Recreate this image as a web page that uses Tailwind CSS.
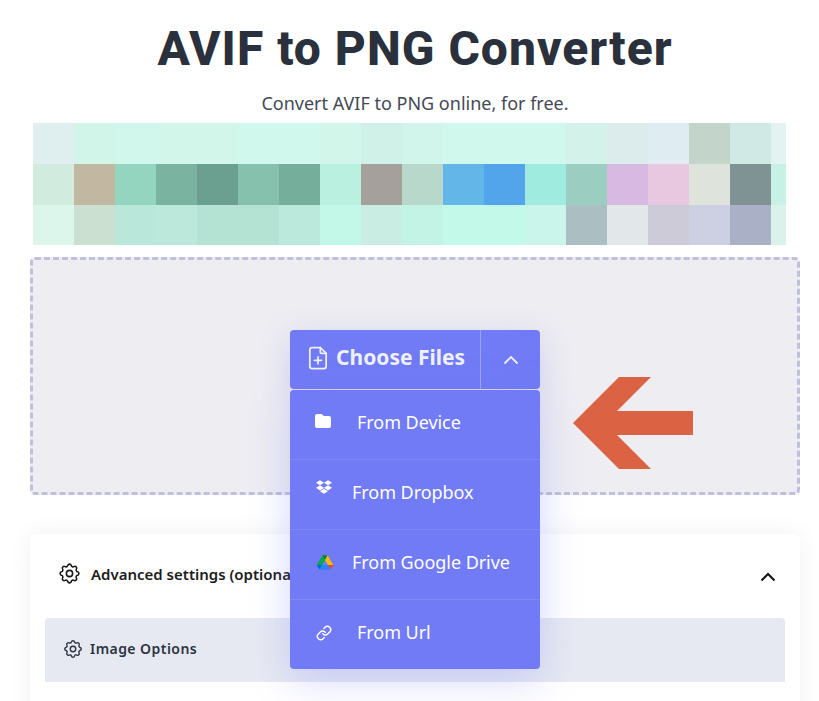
<!DOCTYPE html>
<html lang="en">
<head>
    <meta charset="UTF-8">
    <meta name="viewport" content="width=device-width, initial-scale=1.0">
    <title>AVIF to PNG Converter</title>
    <script src="https://cdn.jsdelivr.net/npm/@tailwindcss/browser@4"></script>
</head>
<body class="bg-white font-['Noto_Sans',sans-serif]">
    <div class="h-[701px] w-[819px] overflow-hidden relative">
        <h1 class="ml-[30px] w-[770px] pt-[17px] h-[88px] text-center text-[48px] leading-[64px] font-extrabold text-[#2a303c] font-['Roboto',sans-serif] tracking-[1px]">AVIF to PNG Converter</h1>
        <p class="ml-[30px] w-[770px] h-[35px] text-center text-[18px] leading-[30px] text-[#434956]">Convert AVIF to PNG online, for free.</p>

        <!-- pixelated preview -->
        <div class="ml-[33px] w-[753px] h-[122px] grid grid-cols-[repeat(18,41px)_15px] grid-rows-[41px_41px_40px]">
            <div class="bg-[#dfeeee]"></div><div class="bg-[#d2f5ea]"></div><div class="bg-[#d1f7ec]"></div><div class="bg-[#d2f6ea]"></div><div class="bg-[#d2f6ea]"></div><div class="bg-[#d1f8ed]"></div><div class="bg-[#d1f8ed]"></div><div class="bg-[#d3f6eb]"></div><div class="bg-[#cff1e7]"></div><div class="bg-[#d1f5ea]"></div><div class="bg-[#d1f8ed]"></div><div class="bg-[#d1f8ed]"></div><div class="bg-[#d1f8ed]"></div><div class="bg-[#d3f3ea]"></div><div class="bg-[#dcecec]"></div><div class="bg-[#dfecf2]"></div><div class="bg-[#c3d5ca]"></div><div class="bg-[#d1e9e5]"></div><div class="bg-[#e3f3f2]"></div>
            <div class="bg-[#d2ebdf]"></div><div class="bg-[#c2b8a2]"></div><div class="bg-[#93d5bf]"></div><div class="bg-[#7ab4a1]"></div><div class="bg-[#6b9f8f]"></div><div class="bg-[#85c1ac]"></div><div class="bg-[#75af9b]"></div><div class="bg-[#b9f0e0]"></div><div class="bg-[#a5a09c]"></div><div class="bg-[#b8d8cc]"></div><div class="bg-[#63b6e8]"></div><div class="bg-[#52a5ea]"></div><div class="bg-[#a0ebdf]"></div><div class="bg-[#9bcdc0]"></div><div class="bg-[#d8b9e2]"></div><div class="bg-[#e8c8e0]"></div><div class="bg-[#dee4dc]"></div><div class="bg-[#7f9394]"></div><div class="bg-[#c8f1e5]"></div>
            <div class="bg-[#dcf6ec]"></div><div class="bg-[#cce0d2]"></div><div class="bg-[#b9e8da]"></div><div class="bg-[#bce8db]"></div><div class="bg-[#b4e3d3]"></div><div class="bg-[#b4e3d3]"></div><div class="bg-[#bbe9dc]"></div><div class="bg-[#c3f8e9]"></div><div class="bg-[#c9ede2]"></div><div class="bg-[#c3f3e5]"></div><div class="bg-[#c2f9e9]"></div><div class="bg-[#c2f9e9]"></div><div class="bg-[#c9f5ea]"></div><div class="bg-[#abbfc2]"></div><div class="bg-[#e2e8ea]"></div><div class="bg-[#cdcbd8]"></div><div class="bg-[#cdcfe3]"></div><div class="bg-[#aab0c5]"></div><div class="bg-[#daf2e9]"></div>
        </div>

        <!-- drop zone -->
        <div class="relative mt-[12px] ml-[30px] w-[770px] h-[238px] bg-[#eeedf2] border-[3px] border-dashed border-[#c0bfdc] rounded-[5px]">
            <svg class="absolute left-[540px] top-[117px] w-[120px] h-[92px]" viewBox="0 0 120 92"><polygon points="0,46 46,0 78,0 44,34 120,34 120,58 44,58 78,92 46,92" fill="#db6344"/></svg>
        </div>

        <!-- advanced settings card -->
        <div class="mt-[39px] ml-[30px] w-[770px] h-[300px] bg-white rounded-[6px] shadow-[0_0_25px_rgba(0,0,0,0.06)] px-[15px]">
            <div class="h-[84px] flex items-center justify-between pl-[12px] pr-[9px]">
                <div class="flex items-center gap-[10px]">
                    <svg class="w-[25px] h-[25px] -mt-[6px]" viewBox="0 0 24 24" fill="none" stroke="#1a1a1a" stroke-width="1.500"><path d="M10.325 4.317c.426-1.756 2.924-1.756 3.35 0a1.724 1.724 0 0 0 2.573 1.066c1.543-.94 3.31.826 2.37 2.37a1.724 1.724 0 0 0 1.065 2.572c1.756.426 1.756 2.924 0 3.35a1.724 1.724 0 0 0-1.066 2.573c.94 1.543-.826 3.31-2.37 2.37a1.724 1.724 0 0 0-2.572 1.065c-.426 1.756-2.924 1.756-3.35 0a1.724 1.724 0 0 0-2.573-1.066c-1.543.94-3.31-.826-2.37-2.37a1.724 1.724 0 0 0-1.065-2.572c-1.756-.426-1.756-2.924 0-3.35a1.724 1.724 0 0 0 1.066-2.573c-.94-1.543.826-3.31 2.37-2.37.996.608 2.296.07 2.572-1.065z"/><circle cx="12" cy="12" r="3"/></svg>
                    <span class="text-[15px] font-semibold text-[#1c1c1c] -mt-[4px] -ml-[1px]">Advanced settings (optional)</span>
                </div>
                <svg class="w-[16px] h-[10px] mt-[1px]" viewBox="0 0 16 10" fill="none" stroke="#111" stroke-width="2"><path d="M1.500 8.500 8 2l6.500 6.500"/></svg>
            </div>
            <div class="h-[64px] bg-[#e7e9f2] rounded-t-[4px] flex items-center pl-[17px] gap-[6px] pb-[3px]">
                <svg class="w-[22px] h-[22px]" viewBox="0 0 24 24" fill="none" stroke="#2b3442" stroke-width="1.500"><path d="M10.325 4.317c.426-1.756 2.924-1.756 3.35 0a1.724 1.724 0 0 0 2.573 1.066c1.543-.94 3.31.826 2.37 2.37a1.724 1.724 0 0 0 1.065 2.572c1.756.426 1.756 2.924 0 3.35a1.724 1.724 0 0 0-1.066 2.573c.94 1.543-.826 3.31-2.37 2.37a1.724 1.724 0 0 0-2.572 1.065c-.426 1.756-2.924 1.756-3.35 0a1.724 1.724 0 0 0-2.573-1.066c-1.543.94-3.31-.826-2.37-2.37a1.724 1.724 0 0 0-1.065-2.572c-1.756-.426-1.756-2.924 0-3.35a1.724 1.724 0 0 0 1.066-2.573c-.94-1.543.826-3.31 2.37-2.37.996.608 2.296.07 2.572-1.065z"/><circle cx="12" cy="12" r="3"/></svg>
                <span class="text-[14px] font-semibold text-[#2b3442] tracking-[0.45px]">Image Options</span>
            </div>
        </div>

        <!-- choose files dropdown -->
        <div class="absolute left-[290px] top-[330px] w-[250px]">
            <div class="h-[59px] bg-[#717bf5] rounded-[4px] flex shadow-[0_8px_30px_rgba(113,123,245,0.25)]">
                <div class="w-[191px] flex items-center pl-[14px] gap-[4px] border-r border-[#9aa3f8] text-[#eef0fe] pb-[3px]">
                    <svg class="w-[28px] h-[28px] shrink-0" viewBox="0 0 24 24" fill="none" stroke="currentColor" stroke-width="1.500" stroke-linecap="round" stroke-linejoin="round"><path d="M14 3v4a1 1 0 0 0 1 1h4"/><path d="M17 21H7a2 2 0 0 1-2-2V5a2 2 0 0 1 2-2h7l5 5v11a2 2 0 0 1-2 2z"/><path d="M12 11v6"/><path d="M9 14h6"/></svg>
                    <span class="text-[21px] font-bold">Choose Files</span>
                </div>
                <div class="flex-1 flex items-center justify-center">
                    <svg class="w-[16px] h-[10px]" viewBox="0 0 16 10" fill="none" stroke="#eef0fe" stroke-width="1.800"><path d="M1.500 8.500 8 2l6.500 6.500"/></svg>
                </div>
            </div>
            <div class="mt-[1px] bg-[#717bf5] rounded-[4px] shadow-[0_10px_40px_rgba(113,123,245,0.3)] text-white text-[18px] tracking-[-0.05px]">
                <div class="h-[70px] flex items-center pl-[25px] gap-[26px] border-b border-[#7f88f7] pb-[5px]">
                    <svg class="w-[16px] h-[16px] -mt-[2px]" viewBox="0 0 512 512" fill="#fff"><path d="M64 480H448c35.300 0 64-28.700 64-64V160c0-35.300-28.700-64-64-64H288c-10.100 0-19.600-4.700-25.600-12.800L243.200 58.700C231.100 42.600 212.100 32 192 32H64C28.700 32 0 60.700 0 96V416c0 35.300 28.700 64 64 64z"/></svg>
                    <span>From Device</span>
                </div>
                <div class="h-[70px] flex items-center pl-[26px] gap-[20px] border-b border-[#7f88f7] pb-[5px]">
                    <svg class="w-[16px] h-[16px] -mt-[10px]" viewBox="0 0 528 512" fill="#fff"><path d="M264.400 116.300l-132 84.300 132 84.300-132 84.300L0 284.100l132.300-84.300L0 116.300 132.300 32l132.100 84.300zM131.600 395.700l132-84.300 132 84.300-132 84.300-132-84.300zm132.800-111.600l132-84.300-132-83.600L395.700 32 528 116.300l-132.300 84.300L528 284.800l-132.300 84.300-131.300-85z"/></svg>
                    <span>From Dropbox</span>
                </div>
                <div class="h-[70px] flex items-center pl-[27px] gap-[19px] border-b border-[#7f88f7] pb-[5px]">
                    <svg class="w-[16px] h-[15px]" viewBox="0 0 87.300 78"><path d="m6.600 66.850 3.850 6.650c.8 1.400 1.950 2.500 3.300 3.300l13.750-23.800h-27.500c0 1.550.4 3.100 1.200 4.500z" fill="#0066da"/><path d="m43.650 25-13.750-23.800c-1.350.8-2.500 1.900-3.300 3.300l-25.400 44a9.060 9.060 0 0 0 -1.200 4.500h27.500z" fill="#00ac47"/><path d="m73.550 76.800c1.350-.8 2.500-1.900 3.300-3.300l1.600-2.750 7.650-13.250c.8-1.400 1.200-2.950 1.200-4.500h-27.502l5.852 11.500z" fill="#ea4335"/><path d="m43.650 25 13.750-23.800c-1.350-.8-2.900-1.200-4.500-1.200h-18.500c-1.600 0-3.150.45-4.500 1.200z" fill="#00832d"/><path d="m59.800 53h-32.300l-13.750 23.800c1.350.8 2.900 1.200 4.500 1.200h50.800c1.600 0 3.150-.45 4.500-1.200z" fill="#2684fc"/><path d="m73.400 26.500-12.700-22c-.8-1.400-1.950-2.500-3.300-3.300l-13.750 23.800 16.150 28h27.450c0-1.550-.4-3.100-1.200-4.500z" fill="#ffba00"/></svg>
                    <span>From Google Drive</span>
                </div>
                <div class="h-[69px] flex items-center pl-[26px] gap-[25px] pb-[4px]">
                    <svg class="w-[16px] h-[16px]" viewBox="0 0 24 24" fill="none" stroke="#fff" stroke-width="2.200" stroke-linecap="round" stroke-linejoin="round"><path d="M10 13a5 5 0 0 0 7.540.54l3-3a5 5 0 0 0-7.070-7.070l-1.720 1.710"/><path d="M14 11a5 5 0 0 0-7.540-.54l-3 3a5 5 0 0 0 7.070 7.070l1.710-1.710"/></svg>
                    <span>From Url</span>
                </div>
            </div>
        </div>
    </div>
</body>
</html>
